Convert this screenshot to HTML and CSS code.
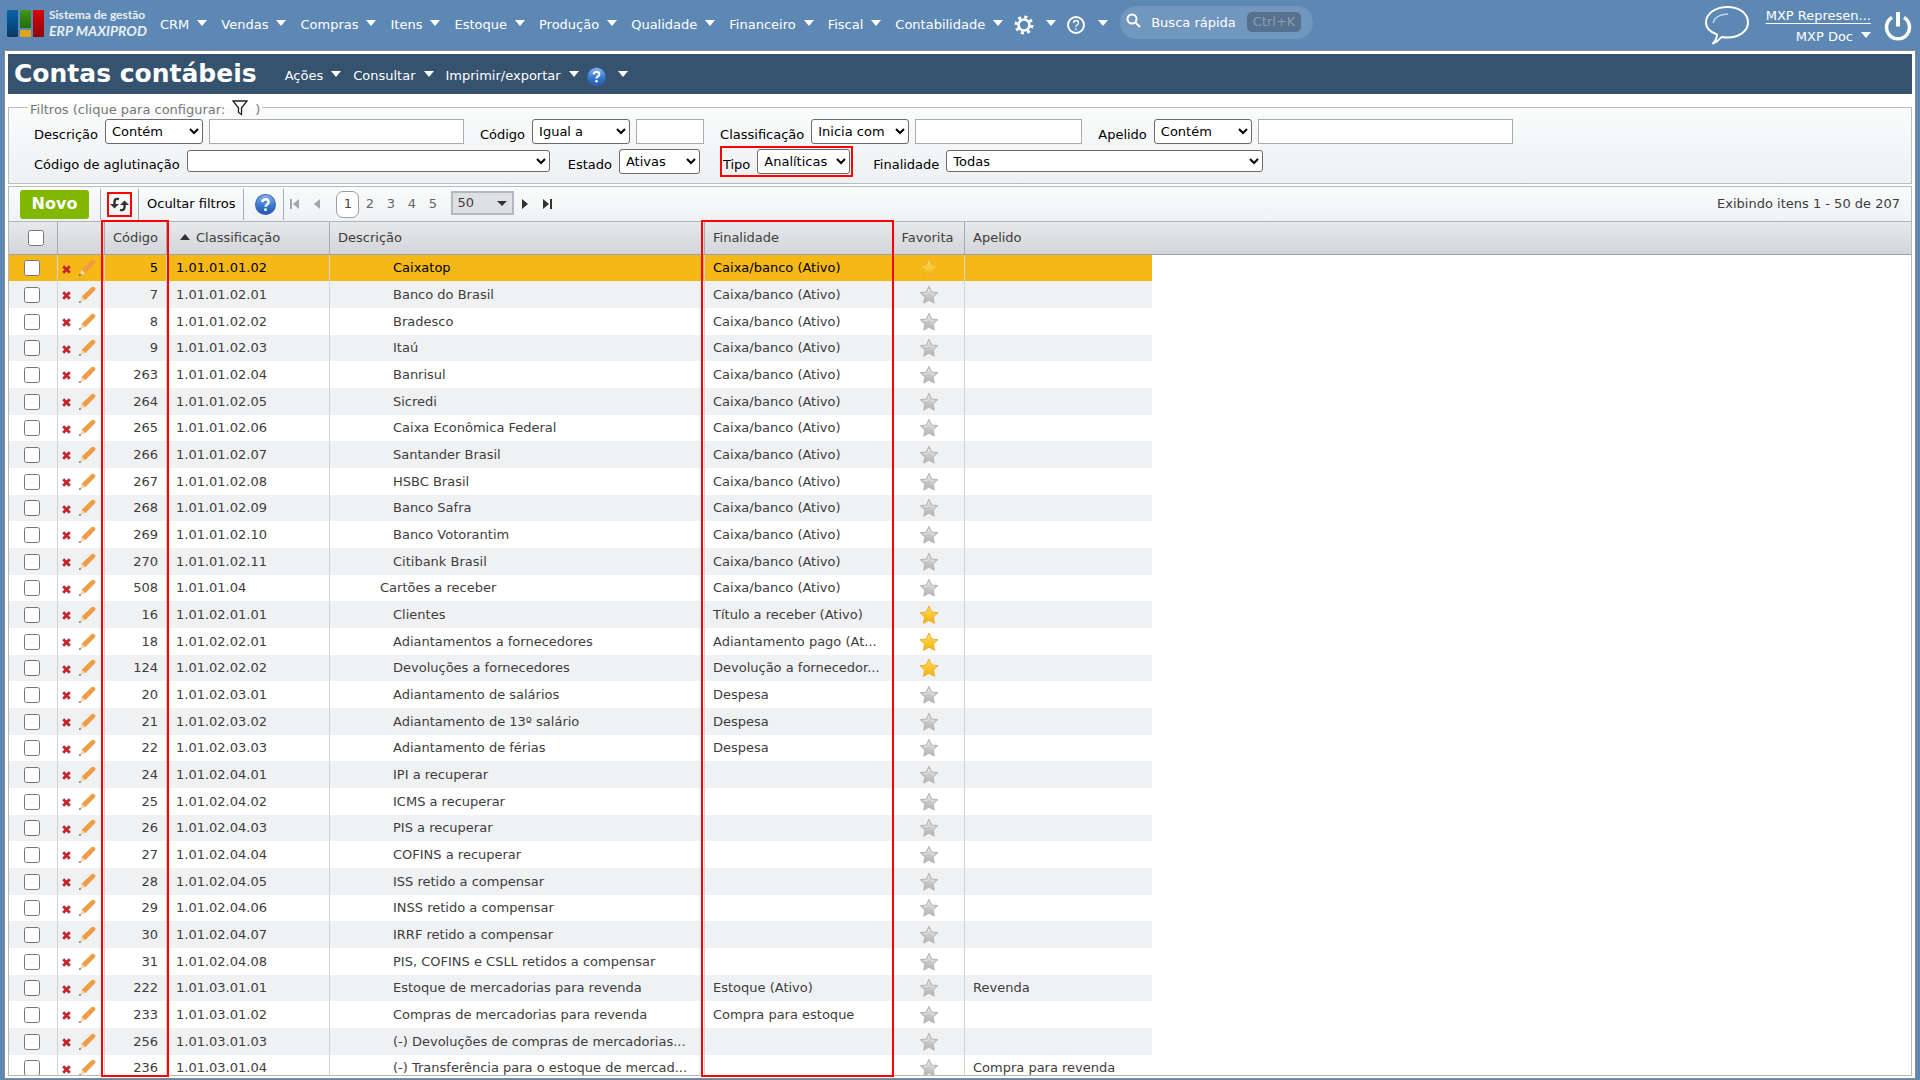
FILE: index.html
```html
<!DOCTYPE html>
<html lang="pt-BR">
<head>
<meta charset="utf-8">
<title>Contas contábeis</title>
<link rel="stylesheet" href="styles.css">
</head>
<body>
<svg class="defs" aria-hidden="true">
  <defs>
    <linearGradient id="gold" x1="0" y1="0" x2="0" y2="1"><stop offset="0" stop-color="#ffe066"/><stop offset="1" stop-color="#f6b000"/></linearGradient>
    <linearGradient id="silver" x1="0" y1="0" x2="0" y2="1"><stop offset="0" stop-color="#dedede"/><stop offset="1" stop-color="#b4b4b4"/></linearGradient>
    <linearGradient id="ball" x1="0" y1="0" x2="0" y2="1"><stop offset="0" stop-color="#8db5ec"/><stop offset=".5" stop-color="#3f7fd6"/><stop offset="1" stop-color="#1f55ad"/></linearGradient>
    <linearGradient id="lb" x1="0" y1="0" x2="0" y2="1"><stop offset="0" stop-color="#0a62a9"/><stop offset="1" stop-color="#073a68"/></linearGradient>
    <linearGradient id="lg" x1="0" y1="0" x2="0" y2="1"><stop offset="0" stop-color="#3f9a17"/><stop offset="1" stop-color="#24690f"/></linearGradient>
    <linearGradient id="lr" x1="0" y1="0" x2="0" y2="1"><stop offset="0" stop-color="#d8040c"/><stop offset="1" stop-color="#8d0508"/></linearGradient>
  </defs>
  <symbol id="del" viewBox="0 0 9 9"><path d="M1.2 1.2 7.8 7.8M7.8 1.2 1.2 7.8" stroke="#c4242b" stroke-width="2.8"/></symbol>
  <symbol id="edit" viewBox="0 0 18 18"><path d="M3.600 10.800 13.200 1.400Q15 .2 16.600 1.600T16.800 4.600L7.200 14.200Z" fill="#ee9d45"/><path d="M3.600 10.800 7.200 14.200 2 16.300Z" fill="#f3d9b0"/><path d="M1 17 1.8 14.8 3.2 16.2Z" fill="#444"/></symbol>
  <symbol id="on" viewBox="0 0 20 20"><path d="M10 1 12.8 7 19 7.7 14.4 12 15.6 18.4 10 15.3 4.4 18.4 5.6 12 1 7.7 7.2 7Z" fill="url(#gold)" stroke="#eab038" stroke-linejoin="round"/></symbol>
  <symbol id="off" viewBox="0 0 20 20"><path d="M10 1.400 12.500 7 18.400 7.700 14 11.800 15.200 18 10 15 4.800 18 6 11.800 1.600 7.700 7.500 7Z" fill="url(#silver)" stroke="#b8b8b8" stroke-width="1.200" stroke-linejoin="round"/><path d="M10 4 11.500 8.500 15.500 9 12.500 11.500M10 4 8.500 8.500 4.500 9" fill="none" stroke="#e6e6e6" stroke-width=".8"/></symbol>
  <symbol id="help" viewBox="0 0 20 20"><circle cx="10" cy="10" r="9.5" fill="url(#ball)" stroke="#3467b4"/><path d="M7 7.8Q7.200 5 10 5T13 7.600Q13 9 11.500 9.900T10 12.200" fill="none" stroke="#fff" stroke-width="2.200"/><circle cx="10" cy="15" r="1.400" fill="#fff"/></symbol>
</svg>

<header class="topbar">
  <a class="logo" href="#" aria-label="Sistema de gestão ERP MAXIPROD">
    <svg width="38" height="28" viewBox="0 0 38 28"><rect x="1" y="0" width="11" height="27" rx="1" fill="url(#lb)"/><rect x="14" y="0" width="11" height="18" rx="1" fill="url(#lg)"/><rect x="14" y="20" width="11" height="7" rx="1" fill="#e3a21c"/><rect x="27" y="0" width="11" height="27" rx="1" fill="url(#lr)"/></svg>
    <span class="brand"><span>Sistema de gestão</span><em>ERP MAXIPROD</em></span>
  </a>
  <nav class="menu">
    <button>CRM</button><button>Vendas</button><button>Compras</button><button>Itens</button><button>Estoque</button><button>Produção</button><button>Qualidade</button><button>Financeiro</button><button>Fiscal</button><button class="tight">Contabilidade</button>
    <button class="pict" aria-label="Configurações"><svg width="20" height="20" viewBox="0 0 20 20" fill="none" stroke="#fff"><circle cx="10" cy="10" r="5.500" stroke-width="2.600"/><circle cx="10" cy="10" r="8" stroke-width="3" stroke-dasharray="3 3.283"/></svg></button>
    <button class="pict" aria-label="Ajuda"><svg width="20" height="20" viewBox="0 0 20 20" fill="none" stroke="#fff"><circle cx="10" cy="10" r="8" stroke-width="2"/><path d="M7.500 8Q7.500 5.500 10 5.500T12.500 8Q12.500 9 11 10T10 12M10 13.500V15" stroke-width="1.400"/></svg></button>
  </nav>
  <button class="search"><svg width="16" height="16" viewBox="0 0 16 16" fill="none" stroke="#fff" stroke-width="2"><circle cx="6" cy="6" r="4.500"/><path d="M9.500 9.500 14 14"/></svg><span>Busca rápida</span><kbd>Ctrl+K</kbd></button>
  <div class="account">
    <svg width="46" height="40" viewBox="0 0 46 40" fill="none" stroke="#fff" stroke-width="2"><path d="M13 29.500C6 27 2 22.500 2 17.500 2 9 11 2 23.500 2S44 9 44 17.500 35 32.500 23.500 32.500Q20 32.500 17.500 32 14 36.500 9 38.500 13 34 13 29.500Z" stroke-linejoin="round"/><path d="M9 18Q11 9.500 24 9" stroke-width="1.500" stroke="#c3d5e8"/></svg>
    <div class="user"><a href="#">MXP Represen...</a><button>MXP Doc</button></div>
    <button class="power" aria-label="Sair"><svg width="28" height="30" viewBox="0 0 28 30" fill="none" stroke="#fff" stroke-width="3.500"><path d="M8 6.500A11.500 11.500 0 1 0 20 6.500"/><path d="M14 1V15.500" stroke-width="4"/></svg></button>
  </div>
</header>

<main class="frame">
  <div class="titlebar">
    <h1>Contas contábeis</h1>
    <nav class="menu sub"><button>Ações</button><button>Consultar</button><button>Imprimir/exportar</button><button class="pict" aria-label="Ajuda"><svg width="19" height="19"><use href="#help"/></svg></button></nav>
  </div>

  <fieldset class="filters">
    <legend>Filtros (clique para configurar: <svg width="16" height="16" viewBox="0 0 16 16" fill="#fff" stroke="#222" stroke-width="1.300"><path d="M1 1H15L9.500 8V14.500L6.500 12.500V8Z"/></svg> )</legend>
    <div class="line">
      <div class="field"><label for="d">Descrição</label><select id="d" class="op"><option>Contém</option></select><input aria-label="Descrição" class="wide"></div>
      <div class="field"><label for="c">Código</label><select id="c" class="op"><option>Igual a</option></select><input aria-label="Código" class="short"></div>
      <div class="field"><label for="k">Classificação</label><select id="k" class="op"><option>Inicia com</option></select><input aria-label="Classificação" class="mid"></div>
      <div class="field"><label for="a">Apelido</label><select id="a" class="op"><option>Contém</option></select><input aria-label="Apelido" class="wide"></div>
    </div>
    <div class="line">
      <div class="field"><label for="g">Código de aglutinação</label><select id="g" class="agl"><option></option></select></div>
      <div class="field"><label for="e">Estado</label><select id="e" class="est"><option>Ativas</option></select></div>
      <div class="field marked"><label for="t">Tipo</label><select id="t" class="tip"><option>Analíticas</option></select></div>
      <div class="field"><label for="f">Finalidade</label><select id="f" class="fin"><option>Todas</option></select></div>
    </div>
  </fieldset>

  <section class="grid">
    <div class="toolbar">
      <div class="cell"><button class="new">Novo</button></div>
      <div class="cell"><button class="refresh" aria-label="Atualizar"><svg width="19" height="15" viewBox="0 0 19 15" fill="none" stroke="#333" stroke-width="2.400"><path d="M9 2.200Q5 1 4.500 4.500V8"/><path d="M0 7H9L4.500 11.500Z" fill="#333" stroke="none"/><path d="M10 12.800Q14 14 14.500 10.500V7"/><path d="M10 8H19L14.500 3.500Z" fill="#333" stroke="none"/></svg></button></div>
      <div class="cell"><button class="hide">Ocultar filtros</button></div>
      <div class="cell"><button aria-label="Ajuda"><svg width="21" height="21"><use href="#help"/></svg></button></div>
      <div class="pager">
        <button class="arrow" aria-label="Primeira"><svg width="10" height="12" viewBox="0 0 10 12" fill="#a3a7ad"><path d="M0 1H2V11H0ZM9 1V11L3 6Z"/></svg></button>
        <button class="arrow" aria-label="Anterior"><svg width="10" height="12" viewBox="0 0 10 12" fill="#a3a7ad"><path d="M7 1V11L1 6Z"/></svg></button>
        <button class="page current">1</button><button class="page">2</button><button class="page">3</button><button class="page">4</button><button class="page">5</button>
        <select class="size" aria-label="Itens por página"><option>50</option></select>
        <button class="arrow" aria-label="Próxima"><svg width="10" height="12" viewBox="0 0 10 12" fill="#333"><path d="M2 1V11L8 6Z"/></svg></button>
        <button class="arrow" aria-label="Última"><svg width="10" height="12" viewBox="0 0 10 12" fill="#333"><path d="M8 1H10V11H8ZM1 1V11L7 6Z"/></svg></button>
      </div>
      <span class="count">Exibindo itens 1 - 50 de 207</span>
    </div>
    <div class="scroll">
      <table>
        <colgroup><col class="c1"><col class="c2"><col class="c3"><col class="c4"><col class="c5"><col class="c6"><col class="c7"><col class="c8"><col></colgroup>
        <thead><tr><th><input type="checkbox" aria-label="Selecionar todos"><th aria-label="Ações"><th class="num">Código<th class="sorted">Classificação<th>Descrição<th>Finalidade<th>Favorita<th>Apelido<th class="rest"></tr></thead>
        <tbody>
<tr class="sel"><td><input type="checkbox" aria-label="Selecionar 5"><td><button aria-label="Excluir"><svg class="x"><use href="#del"/></svg></button><button aria-label="Editar"><svg class="p"><use href="#edit"/></svg></button><td>5<td>1.01.01.01.02<td>Caixatop<td>Caixa/banco (Ativo)<td><svg class="s"><use href="#on"/></svg><td>
<tr><td><input type="checkbox" aria-label="Selecionar 7"><td><button aria-label="Excluir"><svg class="x"><use href="#del"/></svg></button><button aria-label="Editar"><svg class="p"><use href="#edit"/></svg></button><td>7<td>1.01.01.02.01<td>Banco do Brasil<td>Caixa/banco (Ativo)<td><svg class="s"><use href="#off"/></svg><td>
<tr><td><input type="checkbox" aria-label="Selecionar 8"><td><button aria-label="Excluir"><svg class="x"><use href="#del"/></svg></button><button aria-label="Editar"><svg class="p"><use href="#edit"/></svg></button><td>8<td>1.01.01.02.02<td>Bradesco<td>Caixa/banco (Ativo)<td><svg class="s"><use href="#off"/></svg><td>
<tr><td><input type="checkbox" aria-label="Selecionar 9"><td><button aria-label="Excluir"><svg class="x"><use href="#del"/></svg></button><button aria-label="Editar"><svg class="p"><use href="#edit"/></svg></button><td>9<td>1.01.01.02.03<td>Itaú<td>Caixa/banco (Ativo)<td><svg class="s"><use href="#off"/></svg><td>
<tr><td><input type="checkbox" aria-label="Selecionar 263"><td><button aria-label="Excluir"><svg class="x"><use href="#del"/></svg></button><button aria-label="Editar"><svg class="p"><use href="#edit"/></svg></button><td>263<td>1.01.01.02.04<td>Banrisul<td>Caixa/banco (Ativo)<td><svg class="s"><use href="#off"/></svg><td>
<tr><td><input type="checkbox" aria-label="Selecionar 264"><td><button aria-label="Excluir"><svg class="x"><use href="#del"/></svg></button><button aria-label="Editar"><svg class="p"><use href="#edit"/></svg></button><td>264<td>1.01.01.02.05<td>Sicredi<td>Caixa/banco (Ativo)<td><svg class="s"><use href="#off"/></svg><td>
<tr><td><input type="checkbox" aria-label="Selecionar 265"><td><button aria-label="Excluir"><svg class="x"><use href="#del"/></svg></button><button aria-label="Editar"><svg class="p"><use href="#edit"/></svg></button><td>265<td>1.01.01.02.06<td>Caixa Econômica Federal<td>Caixa/banco (Ativo)<td><svg class="s"><use href="#off"/></svg><td>
<tr><td><input type="checkbox" aria-label="Selecionar 266"><td><button aria-label="Excluir"><svg class="x"><use href="#del"/></svg></button><button aria-label="Editar"><svg class="p"><use href="#edit"/></svg></button><td>266<td>1.01.01.02.07<td>Santander Brasil<td>Caixa/banco (Ativo)<td><svg class="s"><use href="#off"/></svg><td>
<tr><td><input type="checkbox" aria-label="Selecionar 267"><td><button aria-label="Excluir"><svg class="x"><use href="#del"/></svg></button><button aria-label="Editar"><svg class="p"><use href="#edit"/></svg></button><td>267<td>1.01.01.02.08<td>HSBC Brasil<td>Caixa/banco (Ativo)<td><svg class="s"><use href="#off"/></svg><td>
<tr><td><input type="checkbox" aria-label="Selecionar 268"><td><button aria-label="Excluir"><svg class="x"><use href="#del"/></svg></button><button aria-label="Editar"><svg class="p"><use href="#edit"/></svg></button><td>268<td>1.01.01.02.09<td>Banco Safra<td>Caixa/banco (Ativo)<td><svg class="s"><use href="#off"/></svg><td>
<tr><td><input type="checkbox" aria-label="Selecionar 269"><td><button aria-label="Excluir"><svg class="x"><use href="#del"/></svg></button><button aria-label="Editar"><svg class="p"><use href="#edit"/></svg></button><td>269<td>1.01.01.02.10<td>Banco Votorantim<td>Caixa/banco (Ativo)<td><svg class="s"><use href="#off"/></svg><td>
<tr><td><input type="checkbox" aria-label="Selecionar 270"><td><button aria-label="Excluir"><svg class="x"><use href="#del"/></svg></button><button aria-label="Editar"><svg class="p"><use href="#edit"/></svg></button><td>270<td>1.01.01.02.11<td>Citibank Brasil<td>Caixa/banco (Ativo)<td><svg class="s"><use href="#off"/></svg><td>
<tr><td><input type="checkbox" aria-label="Selecionar 508"><td><button aria-label="Excluir"><svg class="x"><use href="#del"/></svg></button><button aria-label="Editar"><svg class="p"><use href="#edit"/></svg></button><td>508<td>1.01.01.04<td class="up">Cartões a receber<td>Caixa/banco (Ativo)<td><svg class="s"><use href="#off"/></svg><td>
<tr><td><input type="checkbox" aria-label="Selecionar 16"><td><button aria-label="Excluir"><svg class="x"><use href="#del"/></svg></button><button aria-label="Editar"><svg class="p"><use href="#edit"/></svg></button><td>16<td>1.01.02.01.01<td>Clientes<td>Título a receber (Ativo)<td><svg class="s"><use href="#on"/></svg><td>
<tr><td><input type="checkbox" aria-label="Selecionar 18"><td><button aria-label="Excluir"><svg class="x"><use href="#del"/></svg></button><button aria-label="Editar"><svg class="p"><use href="#edit"/></svg></button><td>18<td>1.01.02.02.01<td>Adiantamentos a fornecedores<td>Adiantamento pago (At...<td><svg class="s"><use href="#on"/></svg><td>
<tr><td><input type="checkbox" aria-label="Selecionar 124"><td><button aria-label="Excluir"><svg class="x"><use href="#del"/></svg></button><button aria-label="Editar"><svg class="p"><use href="#edit"/></svg></button><td>124<td>1.01.02.02.02<td>Devoluções a fornecedores<td>Devolução a fornecedor...<td><svg class="s"><use href="#on"/></svg><td>
<tr><td><input type="checkbox" aria-label="Selecionar 20"><td><button aria-label="Excluir"><svg class="x"><use href="#del"/></svg></button><button aria-label="Editar"><svg class="p"><use href="#edit"/></svg></button><td>20<td>1.01.02.03.01<td>Adiantamento de salários<td>Despesa<td><svg class="s"><use href="#off"/></svg><td>
<tr><td><input type="checkbox" aria-label="Selecionar 21"><td><button aria-label="Excluir"><svg class="x"><use href="#del"/></svg></button><button aria-label="Editar"><svg class="p"><use href="#edit"/></svg></button><td>21<td>1.01.02.03.02<td>Adiantamento de 13º salário<td>Despesa<td><svg class="s"><use href="#off"/></svg><td>
<tr><td><input type="checkbox" aria-label="Selecionar 22"><td><button aria-label="Excluir"><svg class="x"><use href="#del"/></svg></button><button aria-label="Editar"><svg class="p"><use href="#edit"/></svg></button><td>22<td>1.01.02.03.03<td>Adiantamento de férias<td>Despesa<td><svg class="s"><use href="#off"/></svg><td>
<tr><td><input type="checkbox" aria-label="Selecionar 24"><td><button aria-label="Excluir"><svg class="x"><use href="#del"/></svg></button><button aria-label="Editar"><svg class="p"><use href="#edit"/></svg></button><td>24<td>1.01.02.04.01<td>IPI a recuperar<td><td><svg class="s"><use href="#off"/></svg><td>
<tr><td><input type="checkbox" aria-label="Selecionar 25"><td><button aria-label="Excluir"><svg class="x"><use href="#del"/></svg></button><button aria-label="Editar"><svg class="p"><use href="#edit"/></svg></button><td>25<td>1.01.02.04.02<td>ICMS a recuperar<td><td><svg class="s"><use href="#off"/></svg><td>
<tr><td><input type="checkbox" aria-label="Selecionar 26"><td><button aria-label="Excluir"><svg class="x"><use href="#del"/></svg></button><button aria-label="Editar"><svg class="p"><use href="#edit"/></svg></button><td>26<td>1.01.02.04.03<td>PIS a recuperar<td><td><svg class="s"><use href="#off"/></svg><td>
<tr><td><input type="checkbox" aria-label="Selecionar 27"><td><button aria-label="Excluir"><svg class="x"><use href="#del"/></svg></button><button aria-label="Editar"><svg class="p"><use href="#edit"/></svg></button><td>27<td>1.01.02.04.04<td>COFINS a recuperar<td><td><svg class="s"><use href="#off"/></svg><td>
<tr><td><input type="checkbox" aria-label="Selecionar 28"><td><button aria-label="Excluir"><svg class="x"><use href="#del"/></svg></button><button aria-label="Editar"><svg class="p"><use href="#edit"/></svg></button><td>28<td>1.01.02.04.05<td>ISS retido a compensar<td><td><svg class="s"><use href="#off"/></svg><td>
<tr><td><input type="checkbox" aria-label="Selecionar 29"><td><button aria-label="Excluir"><svg class="x"><use href="#del"/></svg></button><button aria-label="Editar"><svg class="p"><use href="#edit"/></svg></button><td>29<td>1.01.02.04.06<td>INSS retido a compensar<td><td><svg class="s"><use href="#off"/></svg><td>
<tr><td><input type="checkbox" aria-label="Selecionar 30"><td><button aria-label="Excluir"><svg class="x"><use href="#del"/></svg></button><button aria-label="Editar"><svg class="p"><use href="#edit"/></svg></button><td>30<td>1.01.02.04.07<td>IRRF retido a compensar<td><td><svg class="s"><use href="#off"/></svg><td>
<tr><td><input type="checkbox" aria-label="Selecionar 31"><td><button aria-label="Excluir"><svg class="x"><use href="#del"/></svg></button><button aria-label="Editar"><svg class="p"><use href="#edit"/></svg></button><td>31<td>1.01.02.04.08<td>PIS, COFINS e CSLL retidos a compensar<td><td><svg class="s"><use href="#off"/></svg><td>
<tr><td><input type="checkbox" aria-label="Selecionar 222"><td><button aria-label="Excluir"><svg class="x"><use href="#del"/></svg></button><button aria-label="Editar"><svg class="p"><use href="#edit"/></svg></button><td>222<td>1.01.03.01.01<td>Estoque de mercadorias para revenda<td>Estoque (Ativo)<td><svg class="s"><use href="#off"/></svg><td>Revenda
<tr><td><input type="checkbox" aria-label="Selecionar 233"><td><button aria-label="Excluir"><svg class="x"><use href="#del"/></svg></button><button aria-label="Editar"><svg class="p"><use href="#edit"/></svg></button><td>233<td>1.01.03.01.02<td>Compras de mercadorias para revenda<td>Compra para estoque<td><svg class="s"><use href="#off"/></svg><td>
<tr><td><input type="checkbox" aria-label="Selecionar 256"><td><button aria-label="Excluir"><svg class="x"><use href="#del"/></svg></button><button aria-label="Editar"><svg class="p"><use href="#edit"/></svg></button><td>256<td>1.01.03.01.03<td>(-) Devoluções de compras de mercadorias...<td><td><svg class="s"><use href="#off"/></svg><td>
<tr><td><input type="checkbox" aria-label="Selecionar 236"><td><button aria-label="Excluir"><svg class="x"><use href="#del"/></svg></button><button aria-label="Editar"><svg class="p"><use href="#edit"/></svg></button><td>236<td>1.01.03.01.04<td>(-) Transferência para o estoque de mercad...<td><td><svg class="s"><use href="#off"/></svg><td>Compra para revenda
        </tbody>
      </table>
    </div>
    <div class="mark mark-code"></div>
    <div class="mark mark-purpose"></div>
  </section>
</main>
</body>
</html>
```
FILE: styles.css
```css
* { box-sizing: border-box; }
body {
  margin: 0;
  height: 100vh;
  display: flex;
  flex-direction: column;
  background: #5d88b3;
  color: #3d3d3d;
  font: 13px/16px Verdana, "DejaVu Sans", sans-serif;
  overflow: hidden;
}
button, input, select { font: inherit; color: inherit; margin: 0; }
button { background: none; border: 0; padding: 0; }
svg { display: block; flex: none; }
.defs { position: absolute; width: 0; height: 0; }

/* Top bar */
.topbar { display: flex; align-items: flex-start; height: 50px; flex: none; padding: 0 6px; color: #fff; }
.logo { display: flex; gap: 5px; width: 154px; flex: none; padding-top: 10px; color: #fff; text-decoration: none; }
.brand { display: flex; flex-direction: column; font: bold 12px/16px Lato, sans-serif; margin-top: -3px; color: #e8eff6; white-space: nowrap; }
.brand em { font-size: 14px; }
.menu { display: flex; align-items: center; gap: 14px; height: 50px; flex: none; }
.menu button { display: flex; align-items: center; gap: 8px; }
.menu button::after, .user button::after {
  content: "";
  border: 5px solid transparent;
  border-top: 6px solid #fff;
  border-bottom: 0;
  margin-bottom: 5px;
}
.menu .tight { margin-right: -3px; }
.menu .pict { gap: 12px; }
.menu .pict + .pict { margin-left: -4px; }
.search { display: flex; align-items: center; height: 33px; margin: 6px 0 0 12px; padding: 0 12px 0 6px; border-radius: 17px; background: #7297be; flex: none; }
.search svg { margin-bottom: 3px; }
.search span { margin: 0 11px 0 9px; }
.search kbd { font: inherit; color: #8e9bad; background: #55718f; border-radius: 5px; padding: 2px 6px; margin-bottom: 2px; }
.account { display: flex; margin-left: auto; }
.account > svg { margin-top: 5px; }
.user { display: flex; flex-direction: column; align-items: flex-end; gap: 5px; width: 121px; padding-top: 8px; }
.user a { color: #fff; text-underline-offset: 3px; }
.user button { display: flex; align-items: center; gap: 8px; }
.power { margin: 7px 2px 0 13px; }

/* Framed page */
.frame { flex: 1; min-height: 0; display: flex; flex-direction: column; margin: 0 4px 1px; padding: 3px; border: 1px solid #8c8c8c; background: #fff; }
.titlebar { display: flex; align-items: center; gap: 28px; height: 40px; flex: none; padding-left: 6px; background: #35526f; color: #fff; }
h1 { margin: 0; font-size: 25px; line-height: 30px; }
.sub { height: 40px; gap: 12px; padding-top: 4px; }
.sub .pict { margin-left: -4px; }

.filters { margin: 3px 0 0; padding: 0 4px 7px 25px; border: 1px solid #b9bcc3; background: linear-gradient(#fafbfb, #eff0f3); color: #000; min-width: 0; }
.filters legend { display: flex; align-items: center; gap: 7px; height: 20px; margin-left: -6px; padding: 5px 2px 0; color: #777; }
.filters legend svg { margin-bottom: 4px; }
.line { display: flex; gap: 16px; align-items: center; height: 30px; }
.line + .line { gap: 18px; }
.line:first-of-type { margin-top: -1px; }
.field { display: flex; align-items: center; gap: 6px; }
.field label { padding: 7px 1px 0 0; }
.field select { height: 25px; background: #fff; border: 1px solid #6b6b6b; border-radius: 3px; color: #000; padding: 0 2px; }
.field input { height: 25px; border: 1px solid #aaa; background: #fff; }
.op { width: 98px; }
.wide { width: 255px; }
.short { width: 68px; }
.mid { width: 167px; }
.field .agl { width: 363px; height: 22px; }
.est { width: 81px; }
.tip { width: 93px; }
.field .fin { width: 317px; height: 22px; }
.marked { outline: 2px solid #f00; outline-offset: 1px; margin: 0 5px; }

/* Grid */
.grid { position: relative; flex: 1; min-height: 0; display: flex; flex-direction: column; margin-top: 2px; border: 1px solid #b5b8bf; margin-bottom: -1px; }
.toolbar { display: flex; align-items: center; height: 35px; flex: none; border-bottom: 1px solid #b0b4ba; background: linear-gradient(#fafbfb, #eff1f3); }
.cell { display: flex; align-items: center; height: 31px; padding: 0 8px; border-right: 1px solid #a9adb4; }
.cell:nth-child(2) { padding: 0 6px; }
.cell:nth-child(4) { padding: 0 7px 0 11px; }
.cell:first-child { padding: 0 11px; }
.new { width: 69px; height: 29px; border-radius: 3px; background: #80b800; color: #fff; font-weight: bold; font-size: 16px; }
.refresh { width: 25px; height: 25px; border: 2px solid #f00; display: grid; place-items: center; }
.hide { color: #000; }
.pager { display: flex; align-items: center; color: #666; }
.arrow { width: 22px; display: grid; place-items: center; }
.arrow:nth-child(1), .arrow:nth-child(2) { margin-right: 1px; }
.page { width: 21px; height: 27px; }
.current { margin-left: 6px; width: 23px; border: 1px solid #9a9da5; border-radius: 7px; background: #fff; color: #444; }
.size {
  appearance: none;
  width: 63px;
  height: 24px;
  margin: 0 0 2px 8px;
  padding: 0 4px;
  border: 2px solid #b4b9bf;
  border-radius: 0;
  color: #3d3d3d;
  background: url("data:image/svg+xml,%3Csvg xmlns='http://www.w3.org/2000/svg' width='10' height='5'%3E%3Cpath d='M0 0H10L5 5Z' fill='%23333'/%3E%3C/svg%3E") no-repeat right 5px center, #dfe0e3;
}
.count { margin-left: auto; padding-right: 11px; }

.scroll { flex: 1; min-height: 0; overflow: hidden; background: #fff; }
table { width: 100%; table-layout: fixed; border-collapse: separate; border-spacing: 0; }
.c1 { width: 48px; } .c2 { width: 47px; } .c3 { width: 62px; } .c4 { width: 163px; }
.c5 { width: 375px; } .c6 { width: 188px; } .c7 { width: 72px; } .c8 { width: 188px; }
th, td { padding: 0 0 0 8px; text-align: left; font-weight: normal; white-space: nowrap; overflow: hidden; border-left: 1px solid #d2d4d9; }
th { height: 33px; background: linear-gradient(#e8e9eb, #d2d5d9); border-left-color: #a6aab2; border-bottom: 1px solid #9da2aa; }
th:first-child, td:first-child, th.rest { border-left: 0; }
th:nth-child(7) { text-align: center; padding: 0 2px 0 0; }
tbody tr { height: 27px; }
tbody tr:nth-child(3n+1) { height: 26px; }
tbody tr:nth-child(even) td { background: #f0f1f3; }
tbody .sel td { background: #f5b817; color: #000; }
td:first-child { padding-left: 15px; }
th:first-child { padding-left: 19px; }
td:nth-child(3), .num { text-align: right; padding: 0 8px 0 0; }
td:nth-child(4) { padding-left: 9px; }
td:nth-child(5) { padding-left: 63px; }
td.up { padding-left: 50px; }
input[type="checkbox"] { display: block; width: 16px; height: 16px; }
td:nth-child(2) { padding-left: 4px; }
td button { display: inline-block; vertical-align: middle; }
.x { width: 9px; height: 9px; margin: 2px 7px 0 0; }
.p { width: 18px; height: 18px; }
.s { width: 20px; height: 20px; margin: 0 auto; }
td:nth-child(7) { padding: 0; }
.sorted::before { content: ""; display: inline-block; border: 5px solid transparent; border-bottom: 6px solid #333; border-top: 0; margin: 0 6px 2px 5px; }

/* Highlight outlines over whole columns */
.mark { position: absolute; top: 33px; bottom: -2px; border: 2px solid #f00; pointer-events: none; }
.mark-code { left: 92px; width: 68px; }
.mark-purpose { left: 692px; width: 193px; }
```
